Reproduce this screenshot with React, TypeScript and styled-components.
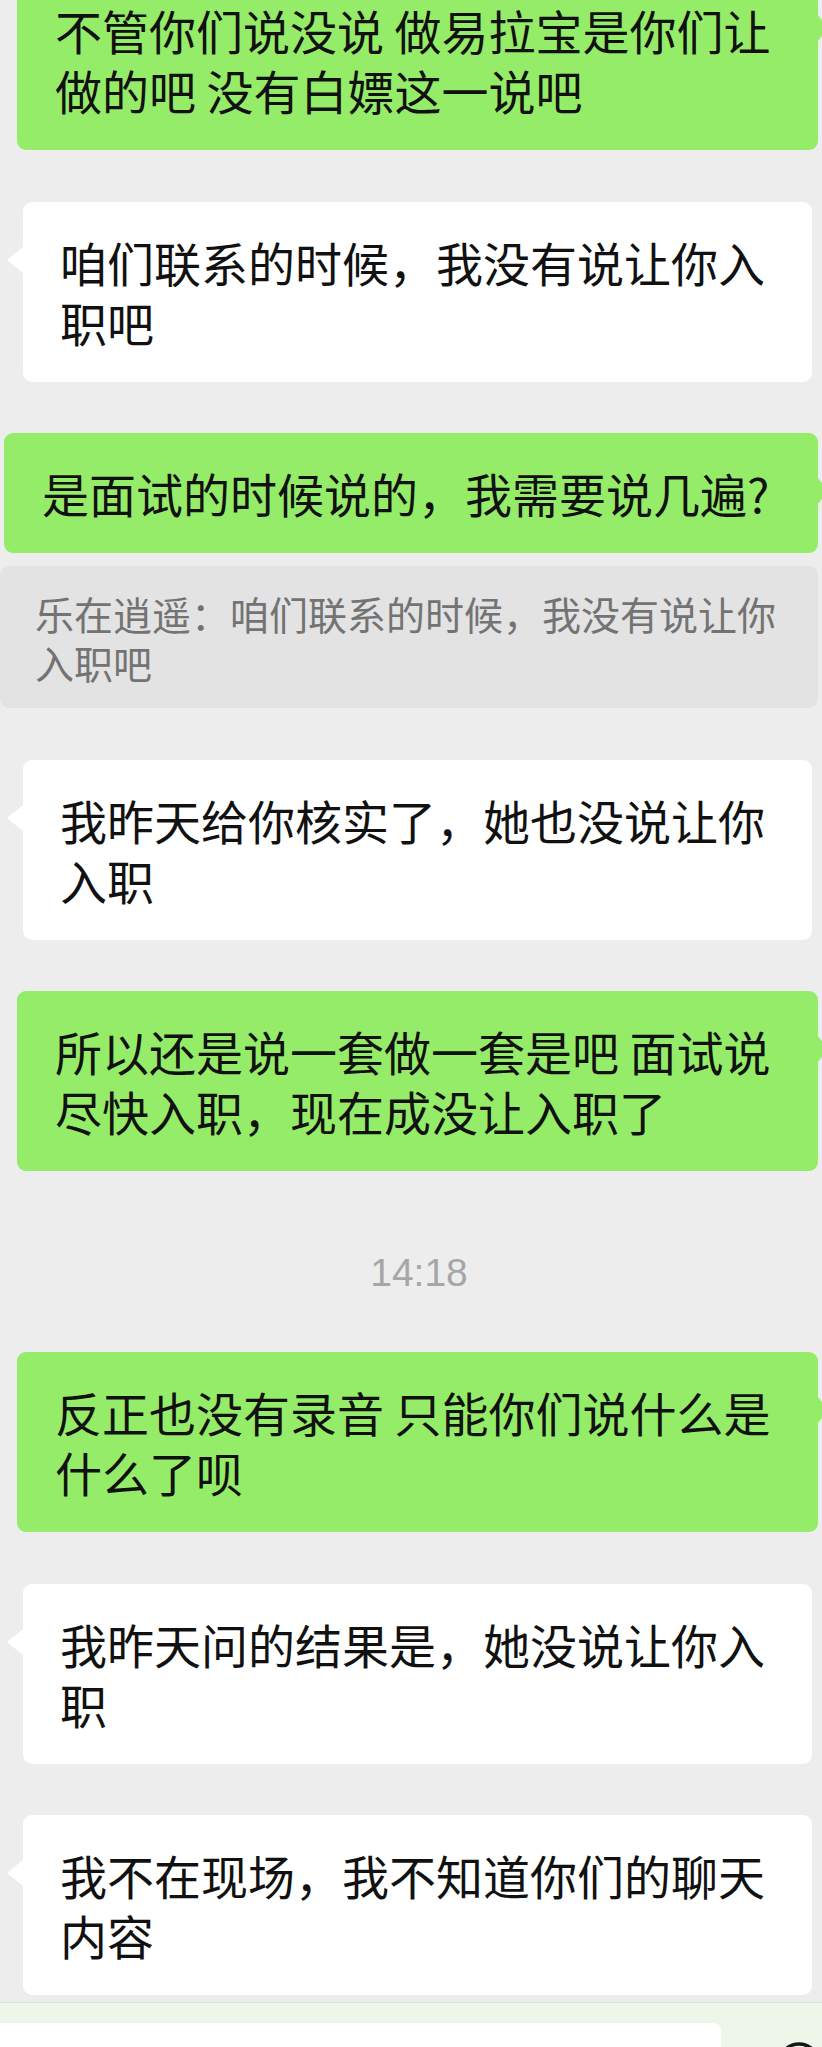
import styled, { createGlobalStyle } from 'styled-components';

type Side = 'in' | 'out';

interface ChatItem {
  kind: 'msg' | 'time';
  side?: Side;
  text: string;
  inset?: number;
  quote?: string;
}

const messages: ChatItem[] = [
  { kind: 'msg', side: 'out', text: '不管你们说没说 做易拉宝是你们让做的吧 没有白嫖这一说吧' },
  { kind: 'msg', side: 'in', text: '咱们联系的时候，我没有说让你入职吧' },
  {
    kind: 'msg',
    side: 'out',
    text: '是面试的时候说的，我需要说几遍?',
    inset: 4,
    quote: '乐在逍遥：咱们联系的时候，我没有说让你入职吧',
  },
  { kind: 'msg', side: 'in', text: '我昨天给你核实了，她也没说让你入职' },
  { kind: 'msg', side: 'out', text: '所以还是说一套做一套是吧 面试说尽快入职，现在成没让入职了' },
  { kind: 'time', text: '14:18' },
  { kind: 'msg', side: 'out', text: '反正也没有录音 只能你们说什么是什么了呗' },
  { kind: 'msg', side: 'in', text: '我昨天问的结果是，她没说让你入职' },
  { kind: 'msg', side: 'in', text: '我不在现场，我不知道你们的聊天内容' },
];

const GlobalStyle = createGlobalStyle`
  html, body {
    margin: 0;
    padding: 0;
    background: #ededed;
  }
  body {
    font-family: "Noto Sans CJK SC", "Noto Sans", sans-serif;
  }
`;

const Page = styled.div`
  width: 822px;
  height: 2047px;
  overflow: hidden;
  display: flex;
  flex-direction: column;
  background: #ededed;
`;

// first bubble is scrolled partly off the top of the screen
const ChatList = styled.div`
  flex: 1;
  display: flex;
  flex-direction: column;
  gap: 51.5px;
  overflow: hidden;

  & > :first-child {
    margin-top: -30px;
  }
`;

const Row = styled.div<{ $side: Side; $inset?: number }>`
  display: flex;
  flex-direction: column;
  gap: 13px;
  padding-left: ${({ $side, $inset }) => ($inset ?? ($side === 'out' ? 17 : 23))}px;
  padding-right: ${({ $side }) => ($side === 'out' ? 4 : 10)}px;
`;

const Bubble = styled.div<{ $side: Side }>`
  position: relative;
  padding: 30px 30px 30px ${({ $side }) => ($side === 'out' ? 38 : 37)}px;
  border-radius: 9px;
  background: ${({ $side }) => ($side === 'out' ? '#95ec69' : '#ffffff')};
  color: #111111;
  font-size: 47px;
  line-height: 60px;
  word-break: break-all;

  &::before {
    content: '';
    position: absolute;
    top: 45px;
    border-top: 13px solid transparent;
    border-bottom: 13px solid transparent;
    ${({ $side }) =>
      $side === 'out'
        ? 'right: -10px; border-left: 10px solid #95ec69;'
        : 'left: -16px; border-right: 16px solid #ffffff;'}
  }
`;

const Quote = styled.div`
  margin-left: -4px;
  padding: 23px 30px 21px 35px;
  border-radius: 9px;
  background: #e3e3e3;
  color: #737373;
  font-size: 39px;
  line-height: 49px;
`;

const TimeRow = styled.div`
  height: 78px;
  padding: 22px 0 0 16px;
  box-sizing: border-box;
  text-align: center;
  font-family: "Liberation Sans", Roboto, sans-serif;
  font-size: 39px;
  line-height: 56px;
  color: #a6a6a6;
`;

const InputBar = styled.div`
  height: 45px;
  flex-shrink: 0;
  border-top: 1px solid #dedede;
  background: #eef6ea;
  display: flex;
  align-items: flex-start;
  padding-top: 20px;
  box-sizing: border-box;
`;

const InputBox = styled.div`
  width: 745px;
  height: 60px;
  background: #ffffff;
  border-top-right-radius: 8px;
`;

const IconButton = styled.div`
  margin: 18px 0 0 55px;
  width: 46px;
  height: 46px;
`;

const EmojiIcon = () => (
  <svg width="46" height="46" viewBox="0 0 46 46">
    <circle cx="23" cy="23" r="20" fill="none" stroke="#161616" strokeWidth="3.5" />
  </svg>
);

export default function App() {
  return (
    <>
      <GlobalStyle />
      <Page>
        <ChatList>
          {messages.map((m, i) =>
            m.kind === 'time' ? (
              <TimeRow key={i}>{m.text}</TimeRow>
            ) : (
              <Row key={i} $side={m.side!} $inset={m.inset}>
                <Bubble $side={m.side!}>{m.text}</Bubble>
                {m.quote && <Quote>{m.quote}</Quote>}
              </Row>
            )
          )}
        </ChatList>
        <InputBar>
          <InputBox />
          <IconButton>
            <EmojiIcon />
          </IconButton>
        </InputBar>
      </Page>
    </>
  );
}
